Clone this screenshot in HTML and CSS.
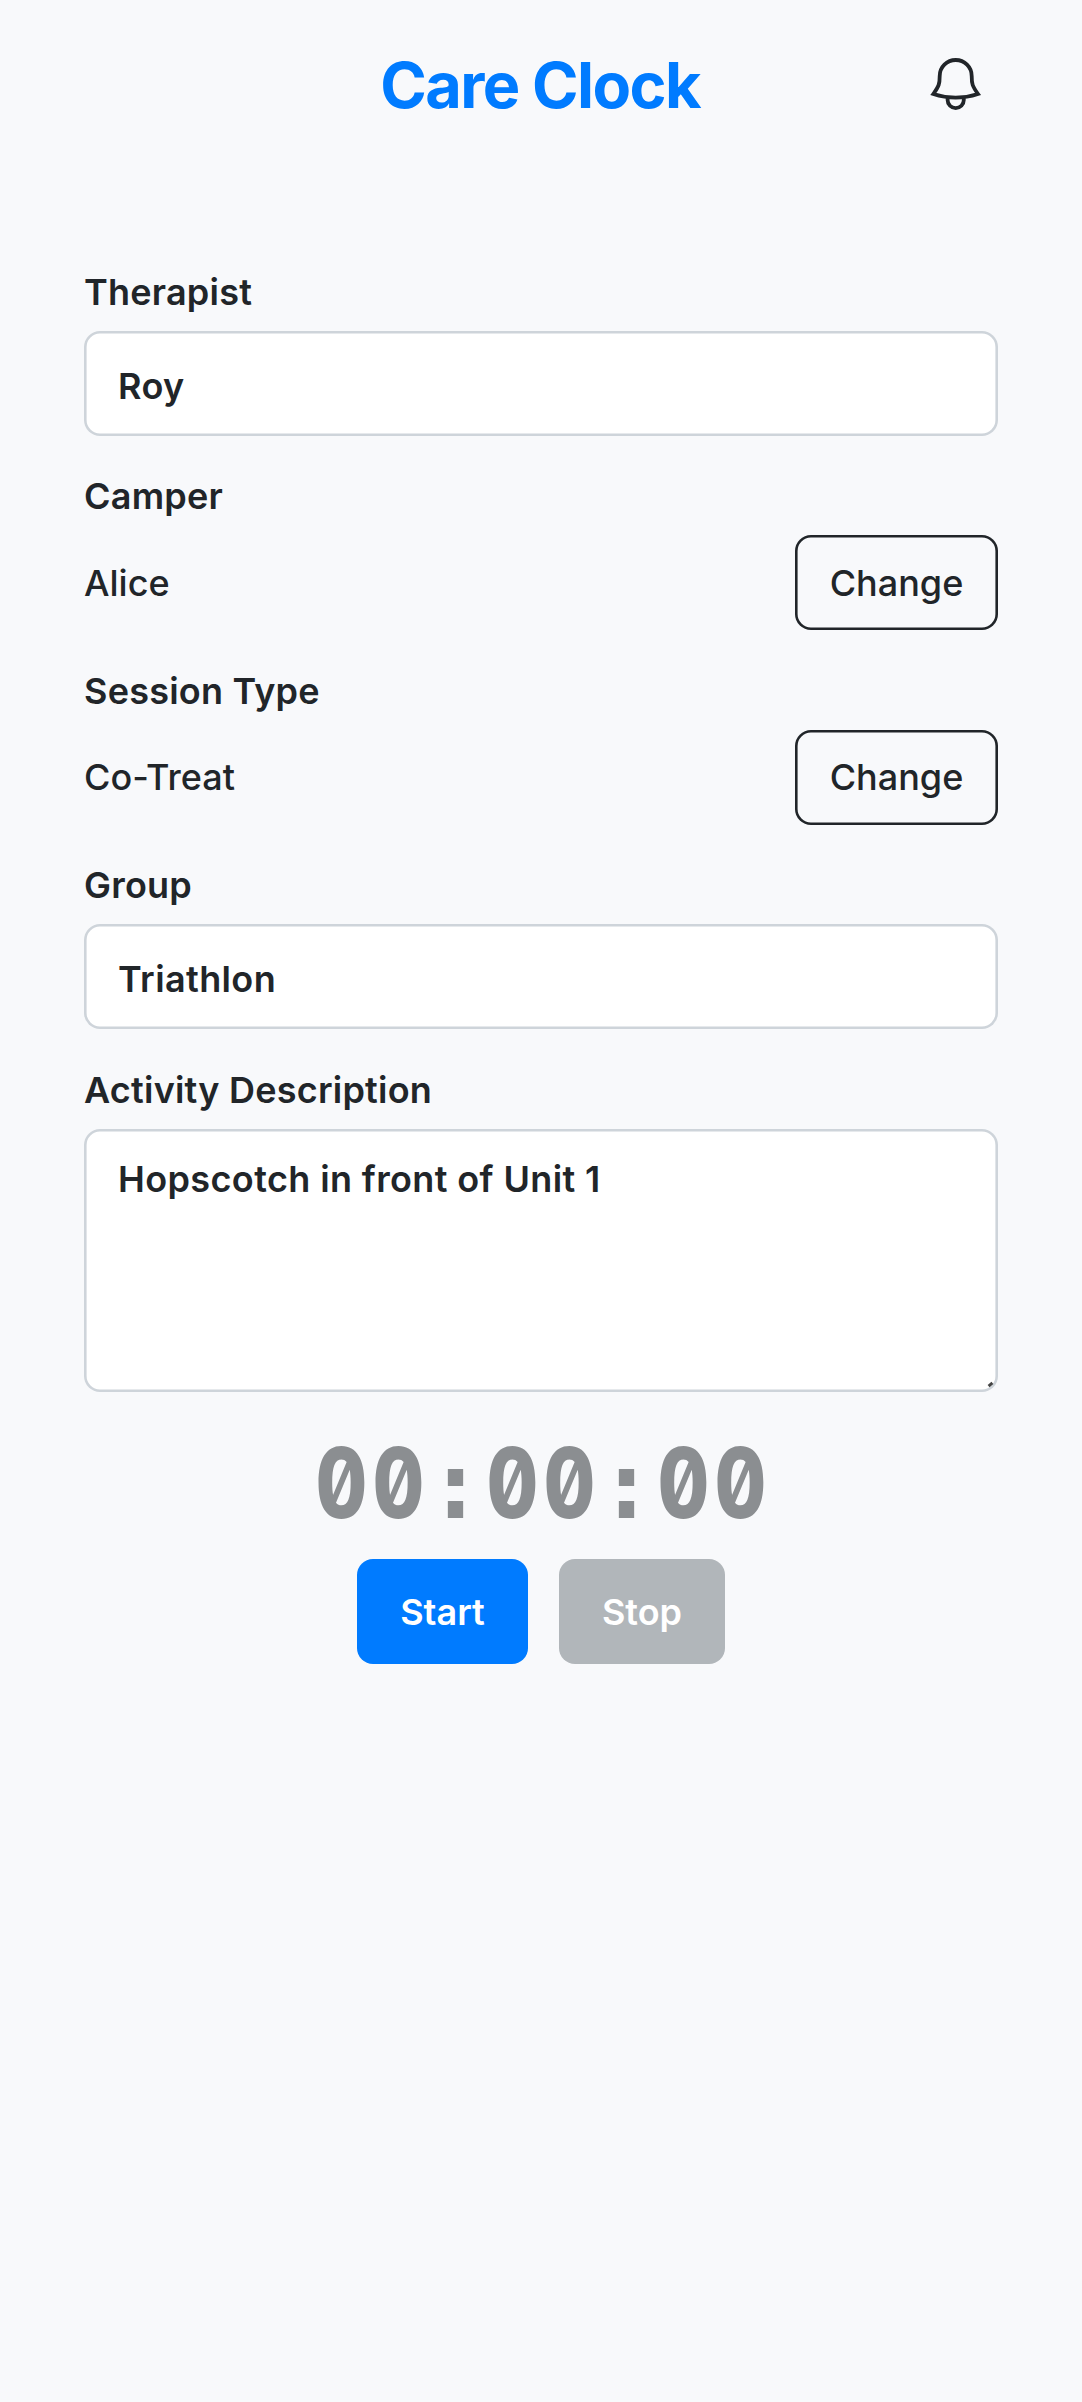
FILE: index.html
```html
<!DOCTYPE html>
<html lang="en">
<head>
<meta charset="utf-8">
<title>Care Clock</title>
<link rel="stylesheet" href="styles.css">
</head>
<body>
<header class="header">
  <h1 class="title">Care Clock</h1>
  <svg class="bell" viewBox="0 0 56 56" fill="none" stroke="currentColor" stroke-width="3.8" role="img" aria-label="Notifications"><path d="M27.7 4A16 16 0 0 0 11.7 20C11.7 28 11 30 5.3 38Q27.7 45.4 50 38C44.3 30 43.7 28 43.7 20A16 16 0 0 0 27.7 4ZM19.6 41.5V44A8.1 8.1 0 0 0 35.8 44V41.5"/></svg>
</header>
<main class="form">
  <section class="field">
    <h2 class="label">Therapist</h2>
    <div class="input"><span>Roy</span></div>
  </section>
  <section class="field camper">
    <h2 class="label">Camper</h2>
    <div class="row"><span class="value">Alice</span><button class="change">Change</button></div>
  </section>
  <section class="field session">
    <h2 class="label">Session Type</h2>
    <div class="row"><span class="value">Co-Treat</span><button class="change">Change</button></div>
  </section>
  <section class="field group">
    <h2 class="label">Group</h2>
    <div class="input"><span>Triathlon</span></div>
  </section>
  <section class="field last">
    <h2 class="label">Activity Description</h2>
    <div class="input area"><span>Hopscotch in front of Unit 1</span><i class="grip"></i></div>
  </section>
  <div class="timer"><span class="digit">0</span><span class="digit">0</span><span class="colon">:</span><span class="digit">0</span><span class="digit">0</span><span class="colon">:</span><span class="digit">0</span><span class="digit">0</span></div>
  <div class="actions">
    <button class="btn start">Start</button>
    <button class="btn stop">Stop</button>
  </div>
</main>
</body>
</html>
```
FILE: styles.css
```css
* { box-sizing: border-box; }
body {
  margin: 0;
  min-height: 2402px;
  background: #f8f9fb;
  color: #212529;
  font: 400 36px/56px Inter, "Liberation Sans", sans-serif;
}
.header {
  display: grid;
  grid-template-columns: 1fr auto 1fr;
  align-items: center;
  height: 170px;
  padding: 0 98px;
}
.title {
  grid-column: 2;
  margin: 0 2px 0 0;
  color: #007bff;
  font-size: 63px;
  line-height: 76px;
  font-weight: 700;
  letter-spacing: -1.6px;
}
.bell { width: 56px; height: 56px; margin-bottom: 2px; justify-self: end; }
.form { padding: 94px 84px 0; }
.field { margin-bottom: 32px; }
.label { margin: 0 0 11px; font-size: 36px; line-height: 56px; font-weight: 600; letter-spacing: .22px; }
.input {
  position: relative;
  display: flex;
  align-items: center;
  height: 105px;
  padding: 5px 35px 0 34px;
  border-radius: 16px;
  background: #fff;
  box-shadow: inset 0 0 0 2.6px #ced4da;
  font-weight: 600;
  letter-spacing: .38px;
}
.area { height: 263px; align-items: flex-start; padding-top: 22px; }
.grip {
  position: absolute;
  right: 5px;
  bottom: 6px;
  width: 5px;
  height: 3px;
  background: #444;
  transform: rotate(-40deg);
}
.row { display: flex; justify-content: space-between; align-items: center; }
.value { font-weight: 500; }
.change {
  width: 203px;
  height: 95px;
  padding: 0;
  border: 0;
  border-radius: 16px;
  background: transparent;
  box-shadow: inset 0 0 0 2.6px #212529;
  color: #212529;
  font: 500 36px/56px Inter, sans-serif;
}
.camper { margin-bottom: 32.5px; }
.session { margin-bottom: 32.5px; }
.group { margin-bottom: 33px; }
.last { margin-bottom: 0; }
.timer {
  display: flex;
  justify-content: center;
  align-items: baseline;
  height: 167px;
  padding-top: 36px;
  color: #8b8e91;
  font-size: 97px;
  line-height: 110px;
  font-weight: 800;
}
.digit, .colon {
  width: 57px;
  display: flex;
  justify-content: center;
}
.digit {
  font-feature-settings: "zero", "tnum";
  transform: scaleX(.82);
}
.colon { font: 700 94px/110px "DejaVu Sans Mono", monospace; }
.actions { display: flex; justify-content: center; gap: 31px; }
.btn {
  height: 105px;
  padding: 0;
  border: 0;
  border-radius: 16px;
  color: #fff;
  font: 600 36px/56px Inter, sans-serif;
}
.start { width: 171px; background: #007bff; }
.stop { width: 166px; background: #b1b6ba; }
```
